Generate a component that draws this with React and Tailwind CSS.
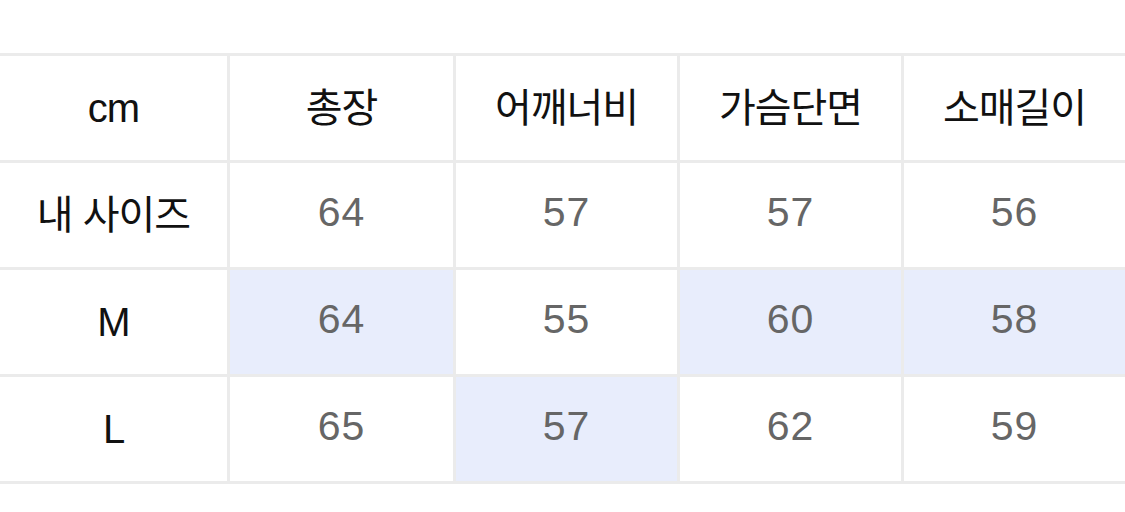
import React from 'react';

const HEAD = ['cm', '총장', '어깨너비', '가슴단면', '소매길이'];

// hl marks the cells shaded blue
const ROWS = [
  { label: '내 사이즈', values: ['64', '57', '57', '56'], hl: [] },
  { label: 'M', values: ['64', '55', '60', '58'], hl: [0, 2, 3] },
  { label: 'L', values: ['65', '57', '62', '59'], hl: [1] },
];

const font = { fontFamily: '"Liberation Sans", "Noto Sans CJK KR", sans-serif' };

export default function App() {
  return (
    <div className="h-[512px] w-full overflow-hidden bg-white pt-[53px]" style={font}>
      <div className="grid grid-cols-[227px_223px_221px_221px_1fr] auto-rows-[104px] gap-[3px] bg-[#ebebeb] py-[3px]">
        {HEAD.map(h => (
          <div key={h} className="flex items-center justify-center bg-white text-[40px] text-[#111] tracking-tight">
            {h}
          </div>
        ))}
        {ROWS.map(r => (
          <React.Fragment key={r.label}>
            <div className="flex items-center justify-center bg-white text-[40px] text-[#111] tracking-tight">
              {r.label}
            </div>
            {r.values.map((v, i) => (
              <div
                key={i}
                className={`flex items-center justify-center pb-[4px] text-[41px] text-[#666] tracking-wide ${r.hl.includes(i) ? 'bg-[#e8edfc]' : 'bg-white'}`}
              >
                {v}
              </div>
            ))}
          </React.Fragment>
        ))}
      </div>
    </div>
  );
}
